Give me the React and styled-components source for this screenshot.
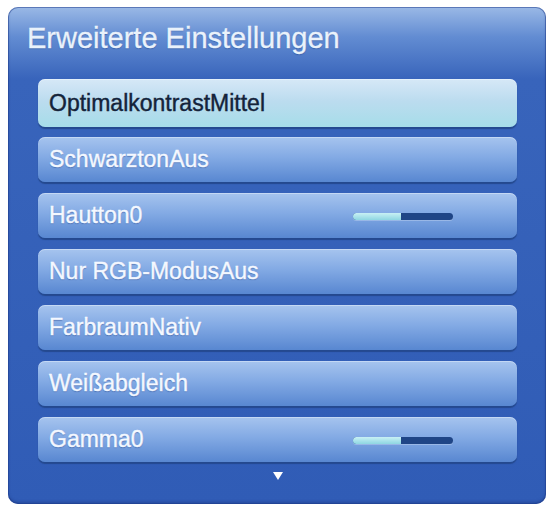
import React from "react";
import styled, { createGlobalStyle } from "styled-components";

const GlobalStyle = createGlobalStyle`
	html, body {
		margin: 0;
		padding: 0;
		background: #ffffff;
	}
	body {
		font-family: "Liberation Sans", Arial, sans-serif;
	}
`;

const items = [
	{ label: "OptimalkontrastMittel", selected: true },
	{ label: "SchwarztonAus" },
	{ label: "Hautton0", level: 48 },
	{ label: "Nur RGB-ModusAus" },
	{ label: "FarbraumNativ" },
	{ label: "Weißabgleich" },
	{ label: "Gamma0", level: 48 },
];

const Page = styled.div`
	padding: 7px 2px 2px 8px;
`;

const Panel = styled.div`
	width: 538px;
	height: 497px;
	box-sizing: border-box;
	border-radius: 10px;
	padding: 14px 29px 0 30px;
	display: flex;
	flex-flow: column nowrap;
	background: linear-gradient(
		to bottom,
		#9ab9e6 0px,
		#628cd2 30px,
		#3864bb 72px,
		#305cb6 100%
	);
	box-shadow: inset 0 0 0 1px rgba(30, 60, 140, 0.5),
		inset 0 -2px 3px rgba(20, 40, 110, 0.35);
`;

const Title = styled.h1`
	margin: 0 0 24px -11px;
	font-size: 29px;
	line-height: 34px;
	font-weight: 400;
	color: #eaf2fb;
	-webkit-text-stroke: 0.3px #eaf2fb;
	text-shadow: 0 1px 1px rgba(20, 50, 120, 0.4);
`;

const List = styled.div`
	display: flex;
	flex-flow: column nowrap;
	gap: 11px;
`;

const Row = styled.div`
	height: ${pr => (pr.selected ? "48px" : "45px")};
	margin-bottom: ${pr => (pr.selected ? "-1px" : "0")};
	box-sizing: border-box;
	border-radius: 7px;
	padding: 0 64px 0 11px;
	display: flex;
	flex-flow: row nowrap;
	align-items: center;
	justify-content: space-between;
	font-size: 23px;
	color: ${pr => (pr.selected ? "#14233a" : "#f4f8ff")};
	-webkit-text-stroke: 0.4px ${pr => (pr.selected ? "#14233a" : "#f4f8ff")};
	background: ${pr =>
		pr.selected
			? "linear-gradient(to bottom, #d6e8f7 0%, #bcdcef 45%, #a6dde9 100%)"
			: "linear-gradient(to bottom, #a6c4ee 0%, #83aae4 45%, #5887d1 100%)"};
	box-shadow: 0 2px 1px #24498f, inset 0 1px 0 rgba(255, 255, 255, 0.35);
	text-shadow: ${pr => (pr.selected ? "none" : "0 1px 1px rgba(30, 60, 130, 0.45)")};
`;

const Slider = styled.div`
	width: 100px;
	height: 7px;
	margin-top: 2px;
	border-radius: 4px;
	background: #1f4586;
	overflow: hidden;
	box-shadow: 0 1px 0 rgba(255, 255, 255, 0.25);
`;

const SliderFill = styled.div`
	height: 100%;
	background: linear-gradient(to bottom, #c8f0f4, #8ed6e2);
`;

const More = styled.div`
	display: flex;
	justify-content: center;
	padding-top: 10px;
`;

const Arrow = styled.div`
	width: 0;
	height: 0;
	border-left: 5.5px solid transparent;
	border-right: 5.5px solid transparent;
	border-top: 8px solid #ffffff;
`;

const App = () => {
	return (
		<Page>
			<GlobalStyle />
			<Panel>
				<Title>Erweiterte Einstellungen</Title>
				<List>
					{items.map(it => (
						<Row key={it.label} selected={it.selected}>
							<span>{it.label}</span>
							{it.level !== undefined && (
								<Slider>
									<SliderFill style={{ width: `${it.level}%` }} />
								</Slider>
							)}
						</Row>
					))}
				</List>
				<More>
					<Arrow />
				</More>
			</Panel>
		</Page>
	);
};

export default App;
